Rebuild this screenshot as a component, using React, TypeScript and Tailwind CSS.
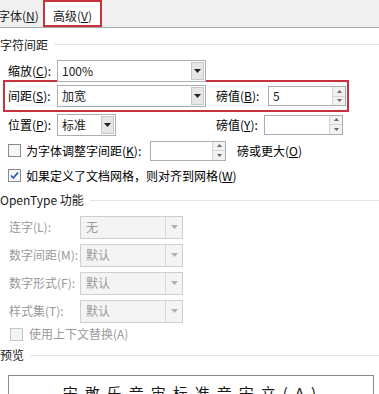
import React from "react";

const font = { fontFamily: '"Noto Sans CJK SC", "Noto Sans", sans-serif' };

const Arrow = ({ disabled }: { disabled?: boolean }) => (
  <svg width="7" height="4" viewBox="0 0 7 4">
    <path d="M0 0h7L3.5 4z" fill={disabled ? "#b0b0b0" : "#222"} />
  </svg>
);

const Select = ({ value, className }: { value: string; className: string }) => (
  <div className={`flex h-[22px] items-stretch border border-[#adadad] bg-white ${className}`}>
    <div className="flex flex-1 items-center pl-[4px] text-[#1a1a1a]">{value}</div>
    <div className="my-[1px] mr-[1px] flex w-[13px] items-center justify-center border border-[#c8c8c8] bg-[#e6e6e6]">
      <Arrow />
    </div>
  </div>
);

const Disabled = ({ value }: { value: string }) => (
  <div className="flex h-[23px] w-[103px] items-stretch border border-[#cfcfcf] bg-[#f4f4f4]">
    <div className="flex flex-1 items-center pl-[5px] text-[#9a9a9a]">{value}</div>
    <div className="flex w-[17px] items-center justify-center border-l border-[#d6d6d6]">
      <Arrow disabled />
    </div>
  </div>
);

const Spin = ({ value, className }: { value?: string; className: string }) => (
  <div className={`flex h-[20px] items-stretch border border-[#abadb3] bg-white ${className}`}>
    <div className="flex flex-1 items-center pl-[4px] text-[#1a1a1a]">{value}</div>
    <div className="flex w-[13px] flex-col border-l border-[#d4d4d4] bg-[#f2f2f2]">
      <div className="flex flex-1 items-center justify-center border-b border-[#d4d4d4]">
        <svg width="5" height="3" viewBox="0 0 5 3">
          <path d="M0 3h5L2.5 0z" fill="#666" />
        </svg>
      </div>
      <div className="flex flex-1 items-center justify-center">
        <svg width="5" height="3" viewBox="0 0 5 3">
          <path d="M0 0h5L2.5 3z" fill="#666" />
        </svg>
      </div>
    </div>
  </div>
);

const Check = ({ checked, disabled }: { checked?: boolean; disabled?: boolean }) => (
  <div
    className={`flex h-[13px] w-[13px] items-center justify-center border ${
      disabled ? "border-[#c6c6c6] bg-[#f4f4f4]" : "border-[#8a8a8a] bg-[#f7f7f7]"
    }`}
  >
    {checked && (
      <svg width="9" height="9" viewBox="0 0 9 9">
        <path d="M1 4.5l2.3 2.5L8 1.5" stroke="#2a5aa8" strokeWidth="1.8" fill="none" />
      </svg>
    )}
  </div>
);

const Header = ({ text, className }: { text: string; className: string }) => (
  <div className={`flex items-center gap-[6px] text-[#1a1a1a] ${className}`}>
    <span>{text}</span>
    <div className="h-[1px] flex-1 bg-[#e4e4e4]" />
  </div>
);

export default function App() {
  return (
    <div className="h-[394px] w-[379px] overflow-hidden bg-white text-[12px] leading-none" style={font}>
      <div className="flex h-[28px] items-stretch border-b border-[#a8a8a8] bg-[#f0f0f0]">
        <div className="ml-[-2px] flex w-[45px] items-center pt-[4px] text-[#1a1a1a]">
          字体(<u>N</u>)
        </div>
        <div className="flex w-[59px] items-center justify-center border-2 border-[#c8323c] bg-white pt-[4px] text-[#1a1a1a]">
          高级(<u>V</u>)
        </div>
      </div>

      <Header text="字符间距" className="h-[33px]" />

      <div className="flex h-[19px] items-center pl-[8px]">
        <span className="w-[49px]">缩放(<u>C</u>):</span>
        <Select value="100%" className="h-[19px] w-[149px]" />
      </div>

      <div className="ml-[3px] flex h-[32px] w-[346px] items-center border-2 border-[#c8323c] pl-[3px]">
        <span className="w-[49px]">间距(<u>S</u>):</span>
        <Select value="加宽" className="w-[149px]" />
        <span className="ml-[10px] w-[52px]">磅值(<u>B</u>):</span>
        <Spin value="5" className="w-[78px]" />
      </div>

      <div className="flex h-[25px] items-center pl-[8px]">
        <span className="w-[49px]">位置(<u>P</u>):</span>
        <Select value="标准" className="w-[59px]" />
        <span className="ml-[100px] w-[48px]">磅值(<u>Y</u>):</span>
        <Spin className="w-[79px]" />
      </div>

      <div className="flex h-[27px] items-center pl-[8px]">
        <Check />
        <span className="ml-[5px] w-[124px]">为字体调整字间距(<u>K</u>):</span>
        <Spin className="w-[76px]" />
        <span className="ml-[11px]">磅或更大(<u>O</u>)</span>
      </div>

      <div className="flex h-[23px] items-center pl-[8px]">
        <Check checked />
        <span className="ml-[5px]">如果定义了文档网格，则对齐到网格(<u>W</u>)</span>
      </div>

      <Header text="OpenType 功能" className="h-[26px]" />

      {[
        ["连字(L):", "无"],
        ["数字间距(M):", "默认"],
        ["数字形式(F):", "默认"],
        ["样式集(T):", "默认"],
      ].map(([label, value]) => (
        <div key={label} className="flex h-[28px] items-center pl-[9px]">
          <span className="w-[71px] text-[#9a9a9a]">{label}</span>
          <Disabled value={value} />
        </div>
      ))}

      <div className="flex h-[18px] items-center pl-[10px]">
        <Check disabled />
        <span className="ml-[6px] text-[#9a9a9a]">使用上下文替换(A)</span>
      </div>

      <Header text="预览" className="h-[24px]" />

      <div className="ml-[8px] mr-[5px] mt-[8px] h-[40px] border border-[#8a8a8a] bg-white pl-[4px] pt-[9px] text-center text-[15px] tracking-[7px] text-[#1a1a1a]">
        宋敢乐音宙标准音宋立(A)
      </div>
    </div>
  );
}
